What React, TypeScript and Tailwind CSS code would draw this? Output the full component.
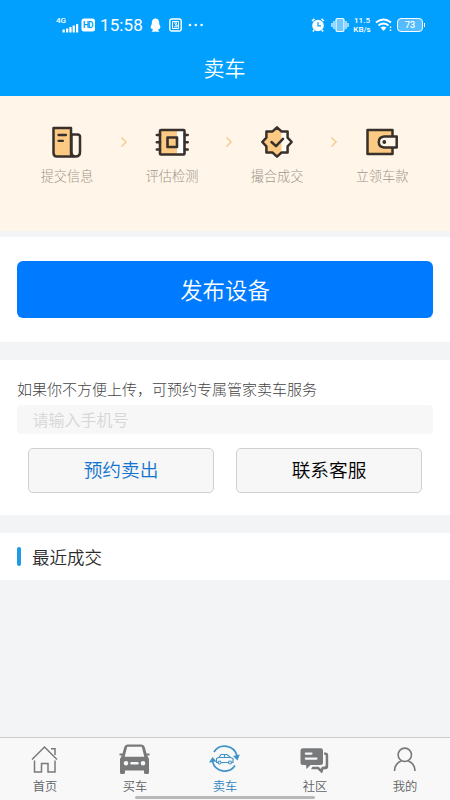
import type { ReactNode } from 'react'

const INK = '#37302b'
const GOLD = '#fcca83'

function DocumentIcon() {
  return (
    <svg width="32" height="32" viewBox="0 0 32 32" fill="none" stroke={INK} strokeWidth="2.500" strokeLinejoin="round" strokeLinecap="round">
      <path d="M2.500 2H20V27.500Q20 30.500 22.500 30.500H6Q2.500 30.500 2.500 27Z" fill={GOLD} />
      <path d="M20.500 8.500H26.500Q29 8.500 29 11V26Q29 30.500 24.500 30.500Q20.500 30.500 20.500 26Z" fill="#fff7ea" />
      <path d="M7.500 9H15M7.500 14.800H12" strokeWidth="2.300" />
    </svg>
  )
}

function ChipIcon() {
  return (
    <svg width="36" height="32" viewBox="0 0 36 32" fill="none" stroke={INK} strokeWidth="2.500" strokeLinecap="round" strokeLinejoin="round">
      <rect x="6.500" y="4" width="23.500" height="24.500" fill="#fff" stroke="none" />
      <rect x="6.500" y="4" width="16.500" height="24.500" fill={GOLD} stroke="none" />
      <rect x="6" y="4" width="24.500" height="24.500" rx="1" strokeWidth="2.600" />
      <rect x="13.500" y="11.500" width="9.500" height="9.500" fill={GOLD} strokeWidth="2.600" />
      <path d="M2.800 9H6M2.800 16.300H6M2.800 23.500H6M31 9H33.700M31 16.300H33.700M31 23.500H33.700" />
    </svg>
  )
}

function SealIcon() {
  return (
    <svg width="34" height="34" viewBox="0 0 34 34" fill="none" stroke={INK} strokeWidth="2.500" strokeLinejoin="round" strokeLinecap="round">
      <path
        d="M17 2.300L21.400 6.400H27.600V12.600L31.700 17L27.600 21.400V27.600H21.400L17 31.700L12.600 27.600H6.400V21.400L2.300 17L6.400 12.600V6.400H12.600Z"
        fill="#fffaf2"
        stroke="none"
      />
      <path d="M17 2.300L21.400 6.400V27.600L17 31.700L12.600 27.600H6.400V21.400L2.300 17L6.400 12.600V6.400H12.600Z" fill={GOLD} stroke="none" />
      <path d="M17 2.300L21.400 6.400H27.600V12.600L31.700 17L27.600 21.400V27.600H21.400L17 31.700L12.600 27.600H6.400V21.400L2.300 17L6.400 12.600V6.400H12.600Z" />
      <path d="M11.500 17L16 21.200L23 13.800" />
    </svg>
  )
}

function WalletIcon() {
  return (
    <svg width="32" height="32" viewBox="0 0 32 32" fill="none" stroke={INK} strokeWidth="2.500" strokeLinejoin="round">
      <rect x="1.500" y="4" width="25" height="24" fill={GOLD} />
      <path d="M30.700 10.500H18Q12.800 11 12.800 16T18 21.500H30.700Z" fill="#fff7ea" />
      <circle cx="18.300" cy="16" r="1.900" fill={INK} stroke="none" />
    </svg>
  )
}

function HomeIcon() {
  return (
    <svg width="32" height="32" viewBox="0 0 32 32" fill="none" stroke="#77797b" strokeWidth="1.500">
      <path d="M3 15.500L15.500 3L28 15.500" />
      <path d="M22 4.800H26V11" />
      <path d="M5.500 16.500V28H12.500V19.500H19V28H26V16.500" />
    </svg>
  )
}

function CarIcon() {
  return (
    <svg width="32" height="32" viewBox="0 0 32 32" fill="#77797b">
      <path
        fillRule="evenodd"
        d="M8.500 .5H22.500Q25 .5 25.700 3L27.500 9.500H30.500V11.500H28.200L30 15V28.500Q30 30 28.500 30H26.500Q25 30 25 28.500V26.500H6V28.500Q6 30 4.500 30H2.500Q1 30 1 28.500V15L2.800 11.500H.5V9.500H3.500L5.300 3Q6 .5 8.500 .5ZM8.200 2.800L5.700 12.800H25.300L22.800 2.800ZM7 17A2.300 2.300 0 1 0 7 21.600A2.300 2.300 0 1 0 7 17ZM24 17A2.300 2.300 0 1 0 24 21.600A2.300 2.300 0 1 0 24 17ZM12.500 18Q11.200 18 11.200 19.300T12.500 20.600H18.500Q19.800 20.600 19.800 19.300T18.500 18Z"
      />
    </svg>
  )
}

function SellIcon() {
  return (
    <svg width="32" height="32" viewBox="0 0 32 32" fill="none" stroke="#3f93c7">
      <path d="M5 8A12.700 12.700 0 0 1 28 12M3.500 17.500A12.500 12.500 0 0 0 26 21.500" strokeWidth="1.700" />
      <path d="M24 12L30.800 10.500L28.500 16.500ZM0 18.500L3.500 13L7.500 17.500Z" fill="#3f93c7" stroke="none" />
      <path d="M9.500 18.500H7.500V14.500L10 13.300L12 10.500H18L21.500 13.500L24 14.500V18.500H22.500M12 18.500H19.500M10 13.500H21M15.500 10.500V13.500" strokeWidth="1.100" />
      <circle cx="10.500" cy="18.500" r="1.500" strokeWidth="1.100" />
      <circle cx="21" cy="18.500" r="1.500" strokeWidth="1.100" />
    </svg>
  )
}

function CommunityIcon() {
  return (
    <svg width="32" height="32" viewBox="0 0 32 32" fill="#77797b">
      <path
        fillRule="evenodd"
        d="M4 4.300H21.500Q24 4.300 24 6.800V18.500Q24 21 21.500 21H11.500L7.500 25L7 21H4Q1.500 21 1.500 18.500V6.800Q1.500 4.300 4 4.300ZM6.800 8.500Q5.700 8.500 5.700 9.600T6.800 10.700H12.500Q13.600 10.700 13.600 9.600T12.500 8.500ZM6.800 13.500Q5.700 13.500 5.700 14.600T6.800 15.700H17.500Q18.600 15.700 18.600 14.600T17.500 13.500Z"
      />
      <path d="M25 8.500H26.500Q29.200 8.500 29.200 11.500V22.500Q29.200 25.300 26.500 25.300H24.500L23 29.500L18.500 25.300H12L13.500 22.800H19.500L22 25L22.800 22.800H24.500Q26.700 22.800 26.700 21V11.500Q26.700 10.500 25 10.500Z" />
    </svg>
  )
}

function PersonIcon() {
  return (
    <svg width="32" height="32" viewBox="0 0 32 32" fill="none" stroke="#77797b" strokeWidth="1.600">
      <circle cx="15.800" cy="10.800" r="6.700" />
      <path d="M5.500 27C5.700 22 8.200 18.500 12.200 17M19.300 17C23.300 18.500 25.800 22 26 27" />
    </svg>
  )
}

function StatusBar() {
  return (
    <div className="flex h-[50px] items-center justify-between pl-14 pr-[25px] text-white">
      <div className="flex items-center">
        <svg width="39" height="18" viewBox="0 0 39 18" fill="currentColor">
          <text x="0" y="6.800" fontSize="8" fontWeight="500" textLength="10">4G</text>
          <path d="M6.500 13.500h2.300v3H6.500zM10 12.500h2.300v4H10zM13.300 11h2.300v5.500h-2.300zM16.600 9.500h2.300v7h-2.300zM20 8h2.200v8.500H20z" />
          <rect x="25.500" y="2.500" width="13.500" height="13" rx="2.500" />
          <text x="27" y="12.200" fontSize="8.500" fontWeight="700" fill="#01a0ff" textLength="10.500">HD</text>
        </svg>
        <span className="ml-[5px] w-[43px] text-[17px] leading-none tracking-[0.1px]">15:58</span>
        <svg className="ml-[7px]" width="11" height="16" viewBox="0 0 11 16" fill="currentColor">
          <path d="M5.500 1.500C8 1.500 9.200 3.300 9.200 5.800V7L10.500 10L9.700 12L8.900 11.800L8 13L9.500 14.500Q7 15.200 5.500 14.500Q4 15.200 1.500 14.500L3 13L2.100 11.800L1.300 12L.5 10L1.800 7V5.800C1.800 3.300 3 1.500 5.500 1.500Z" />
        </svg>
        <svg className="ml-2" width="13" height="14" viewBox="0 0 13 14" fill="none" stroke="currentColor">
          <rect x=".8" y="1" width="11.400" height="12" rx="2" strokeWidth="1.400" />
          <path d="M3.500 3.500H9.500V10.500H3.500ZM5 5H8L6 7H8.200V8.800H5" />
        </svg>
        <svg className="ml-[6px]" width="16" height="4" viewBox="0 0 16 4" fill="currentColor">
          <circle cx="2" cy="2" r="1.300" />
          <circle cx="7.800" cy="2" r="1.300" />
          <circle cx="13.600" cy="2" r="1.300" />
        </svg>
      </div>
      <div className="flex items-center">
        <svg width="14" height="16" viewBox="0 0 14 16" fill="none" stroke="currentColor">
          <circle cx="7" cy="8.500" r="5.800" fill="currentColor" stroke="none" />
          <path d="M1 4L3.500 1.800M13 4L10.500 1.800M3 13L2 14.500M11 13L12 14.500" strokeWidth="1.600" />
          <path d="M7 5V8.800H10" stroke="#01a0ff" strokeWidth="1.200" />
        </svg>
        <svg className="ml-[6px]" width="18" height="16" viewBox="0 0 18 16" fill="none" stroke="currentColor" strokeWidth="1.200">
          <rect x="5" y="1.500" width="8" height="13" rx="1.500" fill="#73c9ff" />
          <path d="M3 4V12M1 6V10M15 4V12M17 6V10" />
        </svg>
        <div className="ml-[3px] flex w-[20px] flex-col items-center text-[8px] font-medium leading-[9px]">
          <div>11.5</div>
          <div>KB/s</div>
        </div>
        <svg className="ml-[3px]" width="19" height="14" viewBox="0 0 19 14" fill="none" stroke="currentColor" strokeWidth="1.900">
          <path d="M1 4.500Q8.500 -1.500 16 4.500M3.500 7.500Q8.500 3.500 13.500 7.500" />
          <path d="M5.500 9.500Q8.500 7.500 11.500 9.500L8.500 13Z" fill="currentColor" stroke="none" />
          <path d="M15.500 8.500V10M15.500 11.500V13" strokeWidth="1.500" />
        </svg>
        <div className="ml-[3px] flex h-[14px] w-[26px] items-center justify-center rounded-[4px] border border-white bg-[#55bcff] text-[9px] font-medium leading-none">
          73
        </div>
        <div className="ml-px h-1 w-px bg-white" />
      </div>
    </div>
  )
}

function Chevron() {
  return (
    <svg className="relative left-1 mt-[11px] shrink-0" width="8" height="12" viewBox="0 0 8 12" fill="none" stroke="#f2cf93" strokeWidth="1.600">
      <path d="M1.500 1.500L6 6L1.500 10.500" />
    </svg>
  )
}

function Step({ icon, label }: { icon: ReactNode; label: string }) {
  return (
    <div className="flex w-[60px] shrink-0 flex-col items-center">
      <div className="flex h-[34px] items-center">{icon}</div>
      <span className="mt-2 whitespace-nowrap text-[13.200px] font-light leading-5 text-[#a0958b]">{label}</span>
    </div>
  )
}

const tabs = [
  { label: '首页', icon: <HomeIcon /> },
  { label: '买车', icon: <CarIcon /> },
  { label: '卖车', icon: <SellIcon />, active: true },
  { label: '社区', icon: <CommunityIcon /> },
  { label: '我的', icon: <PersonIcon /> },
]

export default function App() {
  return (
    <div className="relative flex h-[800px] w-[450px] flex-col overflow-hidden bg-[#f3f4f6] font-[Roboto,'Noto_Sans_CJK_SC',sans-serif]">
      <header className="h-24 shrink-0 bg-[#01a0ff]">
        <StatusBar />
        <h1 className="pr-px pt-[3px] text-center text-[21px] font-[350] leading-8 text-white">卖车</h1>
      </header>

      <section className="flex h-[135px] shrink-0 justify-between bg-[#fff5e9] pl-[37px] pr-[38px] pt-[29px]">
        <Step icon={<DocumentIcon />} label="提交信息" />
        <Chevron />
        <Step icon={<ChipIcon />} label="评估检测" />
        <Chevron />
        <Step icon={<SealIcon />} label="撮合成交" />
        <Chevron />
        <Step icon={<WalletIcon />} label="立领车款" />
      </section>

      <section className="mt-[6px] h-[105px] shrink-0 bg-white px-[17px] pt-6">
        <button className="h-[57px] w-full rounded-md bg-[#007aff] pt-1 text-[22.400px] font-[350] text-white">发布设备</button>
      </section>

      <section className="mt-[18px] h-[155px] shrink-0 bg-white px-[17px] pt-[18px]">
        <p className="relative top-px text-[15px] font-light leading-[22px] text-[#444]">如果你不方便上传，可预约专属管家卖车服务</p>
        <input
          className="mt-[5px] block h-[29px] w-full rounded bg-[#f7f7f7] pl-[15.500px] pt-[2px] text-base font-[350] outline-none placeholder:text-[#d6d6d6]"
          placeholder="请输入手机号"
        />
        <div className="mt-[14px] flex gap-[22px] px-[11px]">
          <button className="h-[45px] flex-1 rounded-[5px] border border-[#cfcfcf] bg-[#f7f7f7] pt-[2px] text-[18.700px] font-[350] text-[#1273d0]">预约卖出</button>
          <button className="h-[45px] flex-1 rounded-[5px] border border-[#cfcfcf] bg-[#f7f7f7] pt-[2px] text-[18.700px] font-[350] text-black">联系客服</button>
        </div>
      </section>

      <section className="mt-[18px] flex h-[47px] shrink-0 items-center bg-white pl-[17px]">
        <div className="h-[19px] w-1 rounded-sm bg-[#1e9be4]" />
        <h2 className="ml-[11px] pt-1 text-[17.500px] font-[350] text-[#2c2c2c]">最近成交</h2>
      </section>

      <nav className="mt-auto flex h-[63px] shrink-0 border-t border-[#cbccce] bg-[#f8f8f8] pt-[6px]">
        {tabs.map((tab) => (
          <div key={tab.label} className="flex w-[90px] flex-col items-center">
            {tab.icon}
            <span className={tab.active ? 'pt-px text-[12.300px] font-[350] leading-5 text-[#2c86be]' : 'pt-px text-[12.300px] font-[350] leading-5 text-[#606264]'}>
              {tab.label}
            </span>
          </div>
        ))}
      </nav>
      <div className="absolute bottom-[1px] left-[135px] h-[3px] w-[180px] rounded-full bg-[#b9b9b9]" />
    </div>
  )
}
